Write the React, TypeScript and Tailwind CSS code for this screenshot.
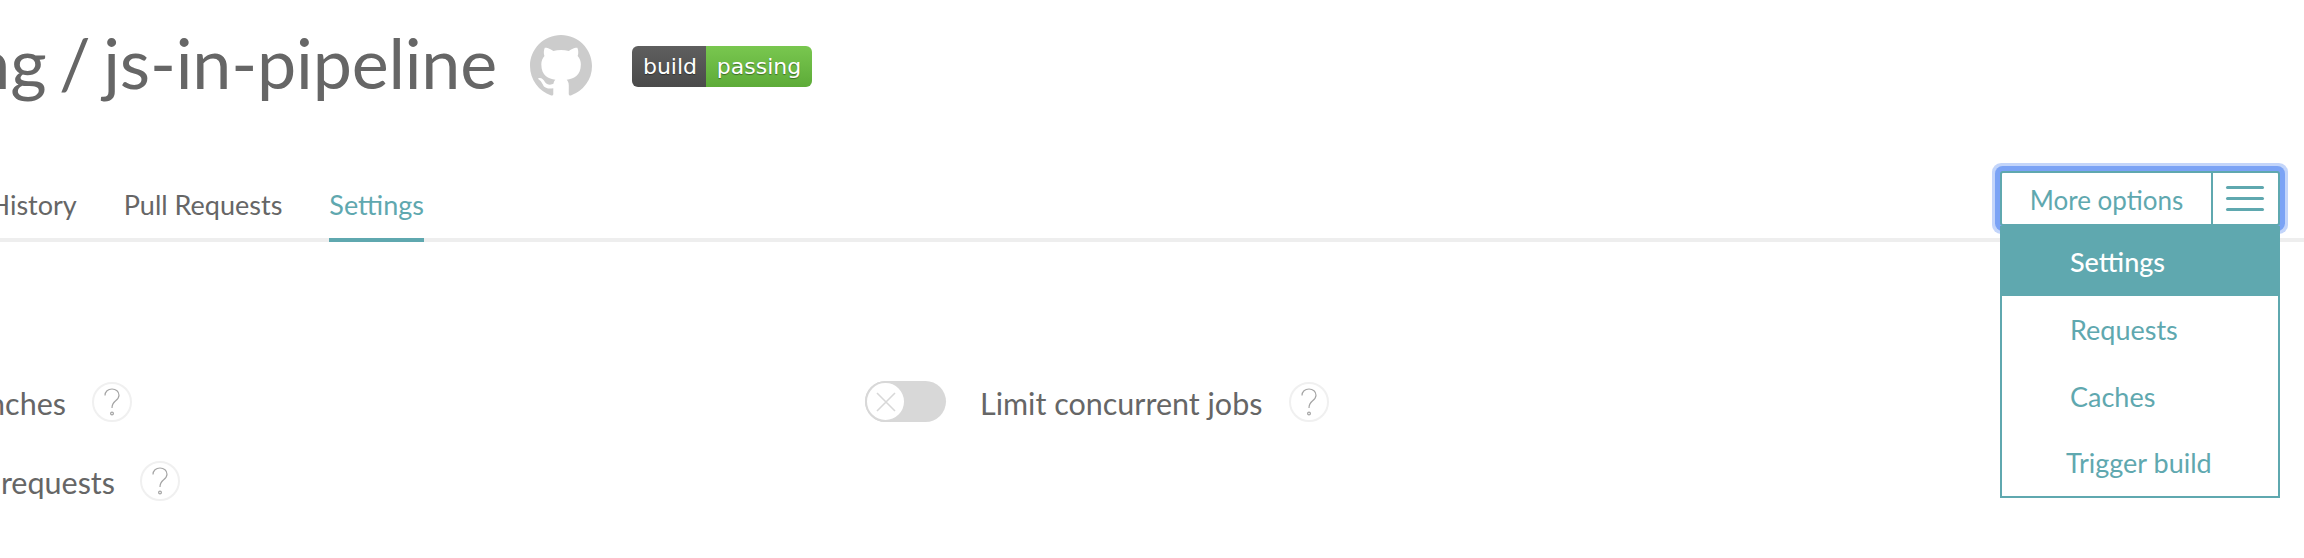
const TEAL = 'text-[#5fa8af]';

function HelpIcon() {
  return (
    <span className="flex h-[40px] w-[40px] shrink-0 items-center justify-center rounded-full border-2 border-[#f0f0f0]">
      <svg width="18" height="28" viewBox="0 0 18 28" fill="none" stroke="#a5a5a5" strokeWidth="1.2">
        <path d="M2 7.5C2 3.5 5 1 9 1s7 2.6 7 6.2c0 2.8-1.6 4.2-3.6 5.8-2.2 1.8-3.4 3.4-3.4 7" />
        <circle cx="9" cy="25.5" r="1.4" />
      </svg>
    </span>
  );
}

function Toggle() {
  return (
    <span className="flex h-[41px] w-[81px] shrink-0 rounded-full bg-[#d8d8d8]">
      <span className="flex h-[41px] w-[41px] items-center justify-center rounded-full border-2 border-[#d8d8d8] bg-white">
        <svg width="20" height="20" viewBox="0 0 20 20" stroke="#d8d8d8" strokeWidth="1.6">
          <path d="M1 1l18 18M19 1L1 19" />
        </svg>
      </span>
    </span>
  );
}

function Badge() {
  return (
    <div className="flex h-[41px] w-[180px] overflow-hidden rounded-[6px] text-[22px] text-white [font-family:'DejaVu_Sans',sans-serif] [text-shadow:0_1px_1px_rgba(0,0,0,0.4)]">
      <span className="flex w-[74px] items-center justify-center bg-gradient-to-b from-[#5f5f5f] to-[#4a4a4a] pl-[2px]">build</span>
      <span className="flex flex-1 items-center justify-center bg-gradient-to-b from-[#79c74f] to-[#5dab38]">passing</span>
    </div>
  );
}

function MoreOptions() {
  return (
    <div className="relative mr-[24px] w-[280px] self-start">
      <div className={`flex h-[55px] rounded-[3px] border-2 border-[#5fa8af] bg-white text-[26px] shadow-[0_0_0_5px_#7ba3f5,0_0_0_8px_#c3d5fa] ${TEAL}`}>
        <span className="flex flex-1 items-center justify-center pt-[3px]">More options</span>
        <span className="flex w-[67px] items-center justify-center border-l-[2px] border-[#5fa8af]">
          <span className="-ml-[2px] flex w-[38px] flex-col gap-[8px]">
            <span className="h-[3px] rounded-full bg-[#5fa8af]" />
            <span className="h-[3px] rounded-full bg-[#5fa8af]" />
            <span className="h-[3px] rounded-full bg-[#5fa8af]" />
          </span>
        </span>
      </div>
      <ul className={`absolute top-full left-0 z-10 w-full border-2 border-t-0 border-[#5fa8af] bg-white text-[27px] ${TEAL}`}>
        <li className="flex h-[70px] items-center bg-[#5fa8af] pl-[68px] pt-[2px] font-medium text-white">Settings</li>
        <li className="flex h-[68px] items-center pl-[68px] pt-[1px]">Requests</li>
        <li className="flex h-[66px] items-center pl-[68px] pt-[1px]">Caches</li>
        <li className="flex h-[66px] items-center pl-[64px] pt-[1px]">Trigger build</li>
      </ul>
    </div>
  );
}

export default function App() {
  return (
    <div className="h-[558px] w-[2304px] overflow-hidden bg-white text-[#666] [font-family:'Lato',sans-serif]">
      <header className="flex h-[171px] items-start pt-[22px]">
        <div className="flex h-[80px] w-[497px] items-center justify-end overflow-hidden whitespace-nowrap text-[70px] tracking-[-0.2px] [word-spacing:-5px]">
          ng / js-in-pipeline
        </div>
        <svg className="ml-[33px] mt-[13px]" width="62" height="62" viewBox="0 0 16 16" fill="#ccc">
          <path d="M8 0C3.58 0 0 3.58 0 8c0 3.54 2.29 6.53 5.47 7.59.4.07.55-.17.55-.38 0-.19-.01-.82-.01-1.49-2.01.37-2.53-.49-2.69-.94-.09-.23-.48-.94-.82-1.13-.28-.15-.68-.52-.01-.53.63-.01 1.08.58 1.23.82.72 1.21 1.87.87 2.33.66.07-.52.28-.87.51-1.07-1.78-.2-3.64-.89-3.64-3.95 0-.87.31-1.59.82-2.15-.08-.2-.36-1.02.08-2.12 0 0 .67-.21 2.2.82.64-.18 1.32-.27 2-.27.68 0 1.36.09 2 .27 1.53-1.04 2.2-.82 2.2-.82.44 1.1.16 1.92.08 2.12.51.56.82 1.27.82 2.15 0 3.07-1.87 3.75-3.65 3.95.29.25.54.73.54 1.48 0 1.07-.01 1.93-.01 2.2 0 .21.15.46.55.38A8.013 8.013 0 0016 8c0-4.42-3.58-8-8-8z" />
        </svg>
        <div className="ml-[40px] mt-[24px]">
          <Badge />
        </div>
      </header>

      <nav className="flex h-[71px] justify-between border-b-4 border-[#eee]">
        <div className="-mb-[4px] flex w-[424px] items-end justify-end gap-[47px] overflow-hidden whitespace-nowrap text-[27px]">
          <span className="pb-[17px]">History</span>
          <span className="pb-[17px]">Pull Requests</span>
          <span className={`border-b-4 border-[#5fa8af] pb-[13px] ${TEAL}`}>Settings</span>
        </div>
        <MoreOptions />
      </nav>

      <section className="flex flex-col gap-[38px] pt-[139px] text-[30.5px]">
        <div className="flex h-[41px] items-center">
          <div className="flex w-[66px] justify-end overflow-hidden whitespace-nowrap pt-[5px]">nches</div>
          <div className="ml-[26px]">
            <HelpIcon />
          </div>
          <div className="ml-[733px]">
            <Toggle />
          </div>
          <span className="ml-[34px] whitespace-nowrap pt-[5px]">Limit concurrent jobs</span>
          <div className="ml-[27px]">
            <HelpIcon />
          </div>
        </div>
        <div className="flex h-[41px] items-center">
          <div className="flex w-[115px] justify-end overflow-hidden whitespace-nowrap pt-[5px]">requests</div>
          <div className="ml-[25px]">
            <HelpIcon />
          </div>
        </div>
      </section>
    </div>
  );
}
